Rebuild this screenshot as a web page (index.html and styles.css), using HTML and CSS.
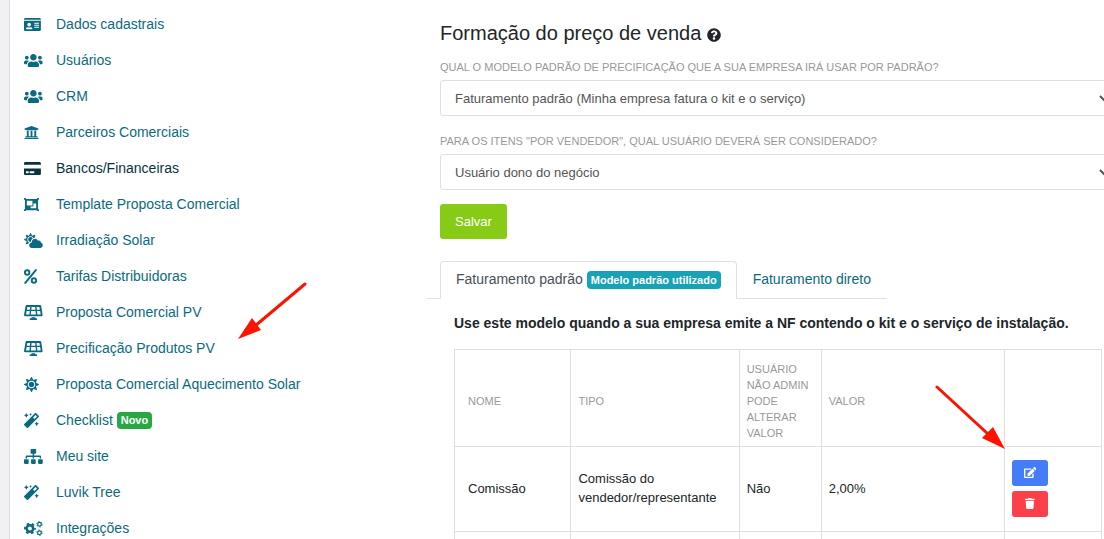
FILE: index.html
```html
<!DOCTYPE html>
<html lang="pt-BR">
<head>
    <meta charset="utf-8">
    <title>Formação do preço de venda</title>
    <link rel="stylesheet" href="styles.css">
</head>
<body>
    <!-- icons used more than once -->
    <svg class="sprite" aria-hidden="true">
        <symbol id="users" viewBox="0 0 640 512"><path d="M96 224c35.3 0 64-28.7 64-64s-28.7-64-64-64-64 28.7-64 64 28.7 64 64 64zm448 0c35.3 0 64-28.7 64-64s-28.7-64-64-64-64 28.7-64 64 28.7 64 64 64zm32 32h-64c-17.6 0-33.5 7.1-45.1 18.6 40.3 22.1 68.9 62 75.1 109.4h66c17.7 0 32-14.3 32-32v-32c0-35.3-28.7-64-64-64zm-256 0c61.9 0 112-50.1 112-112S381.9 32 320 32 208 82.1 208 144s50.1 112 112 112zm76.8 32h-8.3c-20.8 10-43.9 16-68.5 16s-47.6-6-68.5-16h-8.3C179.6 288 128 339.6 128 403.2V432c0 26.5 21.5 48 48 48h288c26.5 0 48-21.5 48-48v-28.8c0-63.6-51.6-115.2-115.2-115.2zm-223.7-13.4C161.5 263.1 145.6 256 128 256H64c-35.3 0-64 28.7-64 64v32c0 17.7 14.3 32 32 32h65.9c6.3-47.4 34.9-87.3 75.2-109.4z"/></symbol>
        <symbol id="solar" viewBox="0 0 640 512"><path d="M431.98 448.01l-47.97.05V416h-128v32.21l-47.98.05c-8.82.01-15.97 7.16-15.98 15.99l-.05 31.73c-.01 8.85 7.17 16.03 16.02 16.02l223.96-.26c8.82-.01 15.97-7.16 15.98-15.98l.04-31.73c.01-8.85-7.17-16.03-16.02-16.02zM585.2 26.74C582.58 11.31 568.99 0 553.06 0H86.93C71 0 57.41 11.31 54.79 26.74-3.32 369.16.04 348.08.03 352c-.03 17.32 14.29 32 32.6 32h574.74c18.23 0 32.51-14.56 32.59-31.79.02-4.08 3.35 16.95-54.76-325.47zM259.83 64h120.33l9.77 96H250.06l9.77-96zm-75.17 256H71.09L90.1 208h105.97l-11.41 112zm16.29-160H98.24l16.29-96h96.19l-9.77 96zm32.82 160l11.4-112h149.65l11.4 112H233.77zm195.5-256h96.19l16.29 96H439.04l-9.77-96zm26.06 256l-11.4-112H549.9l19.01 112H455.33z"/></symbol>
        <symbol id="magic" viewBox="0 0 512 512"><path d="M224 96l16-32 32-16-32-16-16-32-16 32-32 16 32 16 16 32zM80 160l26.66-53.33L160 80l-53.34-26.67L80 0 53.34 53.33 0 80l53.34 26.67L80 160zm352 128l-26.66 53.33L352 368l53.34 26.67L432 448l26.66-53.33L512 368l-53.34-26.67L432 288zm70.62-193.77L417.77 9.38C411.53 3.12 403.34 0 395.15 0c-8.19 0-16.38 3.12-22.63 9.38L9.38 372.52c-12.5 12.5-12.5 32.76 0 45.25l84.85 84.85c6.25 6.25 14.44 9.37 22.62 9.37 8.19 0 16.38-3.12 22.63-9.37l363.14-363.15c12.5-12.48 12.5-32.75 0-45.24zM359.45 203.46l-50.91-50.91 86.6-86.6 50.91 50.91-86.6 86.6z"/></symbol>
    </svg>

    <div class="page">
        <nav class="sidebar">
            <a href="#"><span class="icon"><svg viewBox="0 0 576 512"><path fill-rule="evenodd" d="M528 32H48C21.5 32 0 53.5 0 80v16h576V80c0-26.5-21.5-48-48-48zM0 432c0 26.5 21.5 48 48 48h480c26.5 0 48-21.5 48-48V128H0v304zM352 192h160v36H352zM352 262h160v36H352zM352 332h160v36H352zM176 192c35.3 0 64 28.7 64 64s-28.7 64-64 64-64-28.7-64-64 28.7-64 64-64zM67.1 396.2C75.5 370.5 99.6 352 128 352h8.2c12.3 5.1 25.7 8 39.8 8s27.6-2.9 39.8-8h8.2c28.4 0 52.5 18.5 60.9 44.2 3.2 9.9-5.2 19.8-15.6 19.8H82.7c-10.4 0-18.8-10-15.6-19.8z"/></svg></span>Dados cadastrais</a>
            <a href="#"><span class="icon"><svg viewBox="0 0 640 512"><use href="#users"/></svg></span>Usuários</a>
            <a href="#"><span class="icon"><svg viewBox="0 0 640 512"><use href="#users"/></svg></span>CRM</a>
            <a href="#"><span class="icon"><svg viewBox="0 0 512 512"><path d="M496 128v16a8 8 0 0 1-8 8h-24v12c0 6.627-5.373 12-12 12H60c-6.627 0-12-5.373-12-12v-12H24a8 8 0 0 1-8-8v-16a8 8 0 0 1 4.941-7.392l232-88a7.996 7.996 0 0 1 6.118 0l232 88A8 8 0 0 1 496 128zm-24 304H40c-13.255 0-24 10.745-24 24v16a8 8 0 0 0 8 8h464a8 8 0 0 0 8-8v-16c0-13.255-10.745-24-24-24zM96 192v192H60c-6.627 0-12 5.373-12 12v20h416v-20c0-6.627-5.373-12-12-12h-36V192h-64v192h-64V192h-64v192h-64V192H96z"/></svg></span>Parceiros Comerciais</a>
            <a href="#" class="active"><span class="icon"><svg viewBox="0 0 576 512"><path fill-rule="evenodd" d="M0 432c0 26.5 21.5 48 48 48h480c26.5 0 48-21.5 48-48V256H0v176zm192-68c0-6.6 5.4-12 12-12h136c6.6 0 12 5.4 12 12v40c0 6.6-5.4 12-12 12H204c-6.6 0-12-5.4-12-12v-40zm-128 0c0-6.6 5.4-12 12-12h72c6.6 0 12 5.4 12 12v40c0 6.6-5.4 12-12 12H76c-6.6 0-12-5.4-12-12v-40zM576 80v48H0V80c0-26.5 21.5-48 48-48h480c26.5 0 48 21.5 48 48z"/></svg></span>Bancos/Financeiras</a>
            <a href="#"><span class="icon"><svg viewBox="0 0 512 512"><path fill-rule="evenodd" d="M480 128V96h20c6.627 0 12-5.373 12-12V44c0-6.627-5.373-12-12-12h-40c-6.627 0-12 5.373-12 12v20H64V44c0-6.627-5.373-12-12-12H12C5.373 32 0 37.373 0 44v40c0 6.627 5.373 12 12 12h20v320H12c-6.627 0-12 5.373-12 12v40c0 6.627 5.373 12 12 12h40c6.627 0 12-5.373 12-12v-20h384v20c0 6.627 5.373 12 12 12h40c6.627 0 12-5.373 12-12v-40c0-6.627-5.373-12-12-12h-20V128zM96 276V140c0-6.627 5.373-12 12-12h168c6.627 0 12 5.373 12 12v136c0 6.627-5.373 12-12 12H108c-6.627 0-12-5.373-12-12zm320 96c0 6.627-5.373 12-12 12H236c-6.627 0-12-5.373-12-12v-52h72c13.255 0 24-10.745 24-24v-72h84c6.627 0 12 5.373 12 12v136z"/></svg></span>Template Proposta Comercial</a>
            <a href="#"><span class="icon"><svg viewBox="0 0 640 512"><path d="M575.2 325.7c.2-1.9.8-3.7.8-5.6 0-35.3-28.7-64-64-64-12.6 0-24.2 3.8-34.1 10-17.6-38.8-56.5-66-101.9-66-61.8 0-112 50.1-112 112 0 3 .7 5.8.9 8.7-49.6 3.7-88.9 44.7-88.9 95.3 0 53 43 96 96 96h272c53 0 96-43 96-96 0-42.1-27.2-77.4-64.8-90.4zm-430.4-22.6c-43.7-43.7-43.7-114.7 0-158.3 43.7-43.7 114.7-43.7 158.4 0 9.7 9.7 16.9 20.9 22.3 32.7 9.8-3.7 20.1-6 30.7-7.5L386 81.1c4-11.9-7.3-23.1-19.2-19.2L279 91.2 237.5 8.4C232-2.8 216-2.8 210.4 8.4L169 91.2 81.1 61.9C69.3 58 58 69.3 61.9 81.1l29.3 87.8-82.8 41.5c-11.2 5.6-11.2 21.5 0 27.1l82.8 41.4-29.3 87.8c-4 11.9 7.3 23.1 19.2 19.2l76.1-25.3c6.1-12.4 14-23.7 23.6-33.5-13.1-5.4-25.4-13.4-36-24zm-4.8-79.2c0 40.8 29.3 74.8 67.9 82.3 8-4.7 16.3-8.8 25.2-11.7 5.4-44.3 31-82.5 67.4-105C287.3 160.4 258 140 224 140c-46.3 0-84 37.6-84 83.9z"/></svg></span>Irradiação Solar</a>
            <a href="#"><span class="icon"><svg viewBox="0 0 448 512"><g fill="none" stroke="currentColor" stroke-width="66" stroke-linecap="round"><circle cx="108" cy="118" r="76"/><circle cx="340" cy="394" r="76"/><path d="M404 36L44 476"/></g></svg></span>Tarifas Distribuidoras</a>
            <a href="#"><span class="icon"><svg viewBox="0 0 640 512"><use href="#solar"/></svg></span>Proposta Comercial PV</a>
            <a href="#"><span class="icon"><svg viewBox="0 0 640 512"><use href="#solar"/></svg></span>Precificação Produtos PV</a>
            <a href="#"><span class="icon"><svg viewBox="0 0 512 512"><path d="M256 160c-52.9 0-96 43.1-96 96s43.1 96 96 96 96-43.1 96-96-43.1-96-96-96zm246.4 80.5l-94.7-47.3 33.5-100.4c4.5-13.6-8.4-26.5-21.9-21.9l-100.4 33.5-47.4-94.8c-6.4-12.8-24.6-12.8-31 0l-47.3 94.7L92.7 70.8c-13.6-4.5-26.5 8.4-21.9 21.9l33.5 100.4-94.7 47.4c-12.8 6.4-12.8 24.6 0 31l94.7 47.3-33.5 100.5c-4.5 13.6 8.4 26.5 21.9 21.9l100.4-33.5 47.3 94.7c6.4 12.8 24.6 12.8 31 0l47.3-94.7 100.4 33.5c13.6 4.5 26.5-8.4 21.9-21.9l-33.5-100.4 94.7-47.3c13-6.5 13-24.7.2-31.1zm-155.9 106c-49.9 49.9-131.1 49.9-181 0-49.9-49.9-49.9-131.1 0-181 49.9-49.9 131.1-49.9 181 0 49.9 49.9 49.9 131.1 0 181z"/></svg></span>Proposta Comercial Aquecimento Solar</a>
            <a href="#"><span class="icon"><svg viewBox="0 0 512 512"><use href="#magic"/></svg></span>Checklist <span class="badge badge-success">Novo</span></a>
            <a href="#"><span class="icon"><svg viewBox="0 0 640 512"><path d="M128 352H32c-17.67 0-32 14.33-32 32v96c0 17.67 14.33 32 32 32h96c17.67 0 32-14.33 32-32v-96c0-17.67-14.33-32-32-32zm-24-80h192v48h48v-48h192v48h48v-57.59c0-21.17-17.23-38.41-38.41-38.41H344v-64h40c17.67 0 32-14.33 32-32V32c0-17.67-14.33-32-32-32H256c-17.67 0-32 14.33-32 32v96c0 17.67 14.33 32 32 32h40v64H94.41C73.23 224 56 241.23 56 262.41V320h48v-48zm264 80h-96c-17.67 0-32 14.33-32 32v96c0 17.67 14.33 32 32 32h96c17.67 0 32-14.33 32-32v-96c0-17.67-14.33-32-32-32zm240 0h-96c-17.67 0-32 14.33-32 32v96c0 17.67 14.33 32 32 32h96c17.67 0 32-14.33 32-32v-96c0-17.67-14.33-32-32-32z"/></svg></span>Meu site</a>
            <a href="#"><span class="icon"><svg viewBox="0 0 512 512"><use href="#magic"/></svg></span>Luvik Tree</a>
            <a href="#"><span class="icon"><svg viewBox="0 0 640 512" fill="none" stroke="currentColor">
                <g class="ring">
                    <circle cx="202" cy="256" r="112" stroke-width="86"/>
                    <circle cx="202" cy="256" r="172" stroke-width="60" stroke-dasharray="90 90" stroke-dashoffset="45"/>
                    <circle cx="528" cy="112" r="62" stroke-width="42"/>
                    <circle cx="528" cy="112" r="92" stroke-width="34" stroke-dasharray="48 48"/>
                    <circle cx="528" cy="400" r="62" stroke-width="42"/>
                    <circle cx="528" cy="400" r="92" stroke-width="34" stroke-dasharray="48 48"/>
                </g>
            </svg></span>Integrações</a>
        </nav>

        <main class="content">
            <form class="pricing-form">
                <h1>Formação do preço de venda <svg viewBox="0 0 512 512"><path fill-rule="evenodd" d="M504 256c0 136.997-111.043 248-248 248S8 392.997 8 256C8 119.083 119.043 8 256 8s248 111.083 248 248zM262.655 90c-54.497 0-89.255 22.957-116.549 63.758-3.536 5.286-2.353 12.415 2.715 16.258l34.699 26.31c5.205 3.947 12.621 3.008 16.665-2.122 17.864-22.658 30.113-35.797 57.303-35.797 20.429 0 45.698 13.148 45.698 32.958 0 14.976-12.363 22.667-32.534 33.976C247.128 238.528 216 254.941 216 296v4c0 6.627 5.373 12 12 12h56c6.627 0 12-5.373 12-12v-1.333c0-28.462 83.186-29.647 83.186-106.667 0-58.002-60.165-102-116.531-102zM256 338c-25.365 0-46 20.635-46 46 0 25.364 20.635 46 46 46s46-20.636 46-46c0-25.365-20.635-46-46-46z"/></svg></h1>
                <label for="modelo">Qual o modelo padrão de precificação que a sua empresa irá usar por padrão?</label>
                <select id="modelo">
                    <option>Faturamento padrão (Minha empresa fatura o kit e o serviço)</option>
                </select>
                <label for="usuario">Para os itens "por vendedor", qual usuário deverá ser considerado?</label>
                <select id="usuario">
                    <option>Usuário dono do negócio</option>
                </select>
                <button type="button" class="btn-save">Salvar</button>
            </form>

            <div class="tabs">
                <a href="#" class="tab active">Faturamento padrão <span class="badge badge-info">Modelo padrão utilizado</span></a>
                <a href="#" class="tab">Faturamento direto</a>
            </div>

            <div class="tab-content">
                <p>Use este modelo quando a sua empresa emite a NF contendo o kit e o serviço de instalação.</p>
                <table>
                    <colgroup>
                        <col class="col-name">
                        <col class="col-type">
                        <col class="col-admin">
                        <col class="col-value">
                        <col class="col-actions">
                    </colgroup>
                    <thead>
                        <tr>
                            <th>Nome</th>
                            <th>Tipo</th>
                            <th>Usuário não admin pode alterar valor</th>
                            <th>Valor</th>
                            <th></th>
                        </tr>
                    </thead>
                    <tbody>
                        <tr>
                            <td>Comissão</td>
                            <td>Comissão do vendedor/representante</td>
                            <td>Não</td>
                            <td>2,00%</td>
                            <td>
                                <div class="actions">
                                    <button type="button" class="btn-edit" aria-label="Editar"><svg viewBox="0 0 576 512"><path d="M402.6 83.2l90.2 90.2c3.8 3.8 3.8 10 0 13.8L274.4 405.6l-92.8 10.3c-12.4 1.4-22.9-9.1-21.5-21.5l10.3-92.8L388.8 83.2c3.8-3.8 10-3.8 13.8 0zm162-22.9l-48.8-48.8c-15.2-15.2-39.9-15.2-55.2 0l-35.4 35.4c-3.8 3.8-3.8 10 0 13.8l90.2 90.2c3.8 3.8 10 3.8 13.8 0l35.4-35.4c15.2-15.3 15.2-40 0-55.2zM384 346.2V448H64V128h229.8c3.2 0 6.2-1.3 8.5-3.5l40-40c7.6-7.6 2.2-20.5-8.5-20.5H48C21.5 64 0 85.5 0 112v352c0 26.5 21.5 48 48 48h352c26.5 0 48-21.5 48-48V306.2c0-10.7-12.9-16-20.5-8.5l-40 40c-2.2 2.3-3.5 5.3-3.5 8.5z"/></svg></button>
                                    <button type="button" class="btn-delete" aria-label="Excluir"><svg viewBox="0 0 448 512"><path d="M432 32H312l-9.4-18.7A24 24 0 0 0 281.1 0H166.8a23.72 23.72 0 0 0-21.4 13.3L136 32H16A16 16 0 0 0 0 48v32a16 16 0 0 0 16 16h416a16 16 0 0 0 16-16V48a16 16 0 0 0-16-16zM53.2 467a48 48 0 0 0 47.9 45h245.8a48 48 0 0 0 47.9-45L416 128H32z"/></svg></button>
                                </div>
                            </td>
                        </tr>
                        <tr>
                            <td></td>
                            <td></td>
                            <td></td>
                            <td></td>
                            <td></td>
                        </tr>
                    </tbody>
                </table>
            </div>
        </main>
    </div>

    <!-- red pointers over the page -->
    <svg class="pointer pointer-menu" viewBox="0 0 70 58"><path d="M67 2L17 44" stroke="#ff1200" stroke-width="3" stroke-linecap="round"/><path d="M0 57L14 36L23 48z" fill="#ff1200"/></svg>
    <svg class="pointer pointer-edit" viewBox="0 0 70 64"><path d="M2 2L53 49" stroke="#ff1200" stroke-width="3" stroke-linecap="round"/><path d="M70 64L47 53L58 42z" fill="#ff1200"/></svg>
</body>
</html>
```
FILE: styles.css
```css
* {
  box-sizing: border-box;
}

body {
  margin: 0;
  height: 100vh;
  overflow: hidden;
  background: #fff;
  color: #212529;
  font-family: "Liberation Sans", Arial, sans-serif;
  font-size: 13px;
}

a {
  color: #0b6a80;
  text-decoration: none;
}

svg {
  fill: currentColor;
}

.sprite {
  display: none;
}

.page {
  display: grid;
  grid-template-columns: 427px 1fr;
  height: 100vh;
}

/* Left menu */
.sidebar {
  border-left: 9px solid #f1f1f4;
  box-shadow: inset 1px 0 #dcdce0;
  padding: 6px 0 0 15px;
}

.sidebar a {
  display: flex;
  align-items: center;
  height: 36px;
  font-size: 14px;
  white-space: pre;
}

.sidebar a.active {
  color: #07333f;
}

.icon {
  display: flex;
  width: 32px;
}

.icon svg {
  height: 15px;
}

.ring {
  fill: none;
}

.badge {
  padding: 3px 4px;
  border-radius: 4px;
  color: #fff;
  font-size: 11px;
  font-weight: bold;
  line-height: 11px;
}

.badge-success {
  background: #28a745;
}

.badge-info {
  background: #17a2b8;
}

/* Form */
.content {
  min-width: 0;
  padding-top: 20px;
}

.pricing-form {
  display: flex;
  flex-direction: column;
  align-items: flex-start;
  margin: 0 -9px 0 13px;
}

h1 {
  margin: 0 0 13px;
  font-size: 20px;
  font-weight: normal;
  line-height: 26px;
}

h1 svg {
  height: 14px;
  vertical-align: -2px;
}

label,
th {
  color: #999;
  font-size: 11px;
  font-weight: normal;
  line-height: 16px;
  text-transform: uppercase;
}

label {
  margin-bottom: 5px;
}

select {
  width: 100%;
  height: 36px;
  padding: 0 10px;
  border: 1px solid #dfdfdf;
  border-radius: 3px;
  background: #fff;
  color: #555;
  font-family: inherit;
  font-size: 13px;
}

select + label {
  margin-top: 17px;
}

button {
  border: none;
  border-radius: 3px;
  color: #fff;
  font-family: inherit;
  font-size: 13px;
}

.btn-save {
  height: 35px;
  margin-top: 14px;
  padding: 0 15px;
  background: #87cb16;
}

/* Tabs */
.tabs {
  display: flex;
  width: fit-content;
  margin-top: 22px;
  padding-left: 13px;
  border-bottom: 1px solid #dee2e6;
}

.tab {
  height: 37px;
  padding: 0 15px;
  border: 1px solid transparent;
  border-bottom: none;
  font-size: 14px;
  line-height: 35px;
}

.tab.active {
  height: 38px;
  margin-bottom: -1px;
  border-color: #dee2e6;
  border-radius: 4px 4px 0 0;
  background: #fff;
  color: #495057;
}

.tab-content {
  padding: 14px 2px 0 27px;
}

.tab-content p {
  margin: 0 0 16px;
  font-size: 14px;
  font-weight: bold;
  line-height: 20px;
}

/* Table */
table {
  width: 100%;
  table-layout: fixed;
  border-collapse: collapse;
}

.col-name {
  width: 18%;
}

.col-type {
  width: 26%;
}

.col-admin {
  width: 82px;
}

.col-actions {
  width: 15%;
}

th,
td {
  border: 1px solid #dfdfdf;
  text-align: left;
}

th {
  padding: 11px 8px 5px 7px;
}

td {
  height: 85px;
  padding: 0 8px 2px 7px;
  line-height: 19px;
}

th:first-child,
td:first-child {
  padding-left: 13px;
}

.actions {
  display: flex;
  flex-direction: column;
  gap: 5px;
}

.actions button {
  display: flex;
  align-items: center;
  justify-content: center;
  width: 36px;
  height: 26px;
}

.actions svg {
  height: 11px;
}

.btn-edit {
  background: #447df7;
}

.btn-delete {
  background: #fb404b;
}

/* Pointers */
.pointer {
  position: absolute;
}

.pointer-menu {
  top: 282px;
  left: 238px;
  width: 70px;
}

.pointer-edit {
  top: 385px;
  left: 935px;
  width: 70px;
}
```
